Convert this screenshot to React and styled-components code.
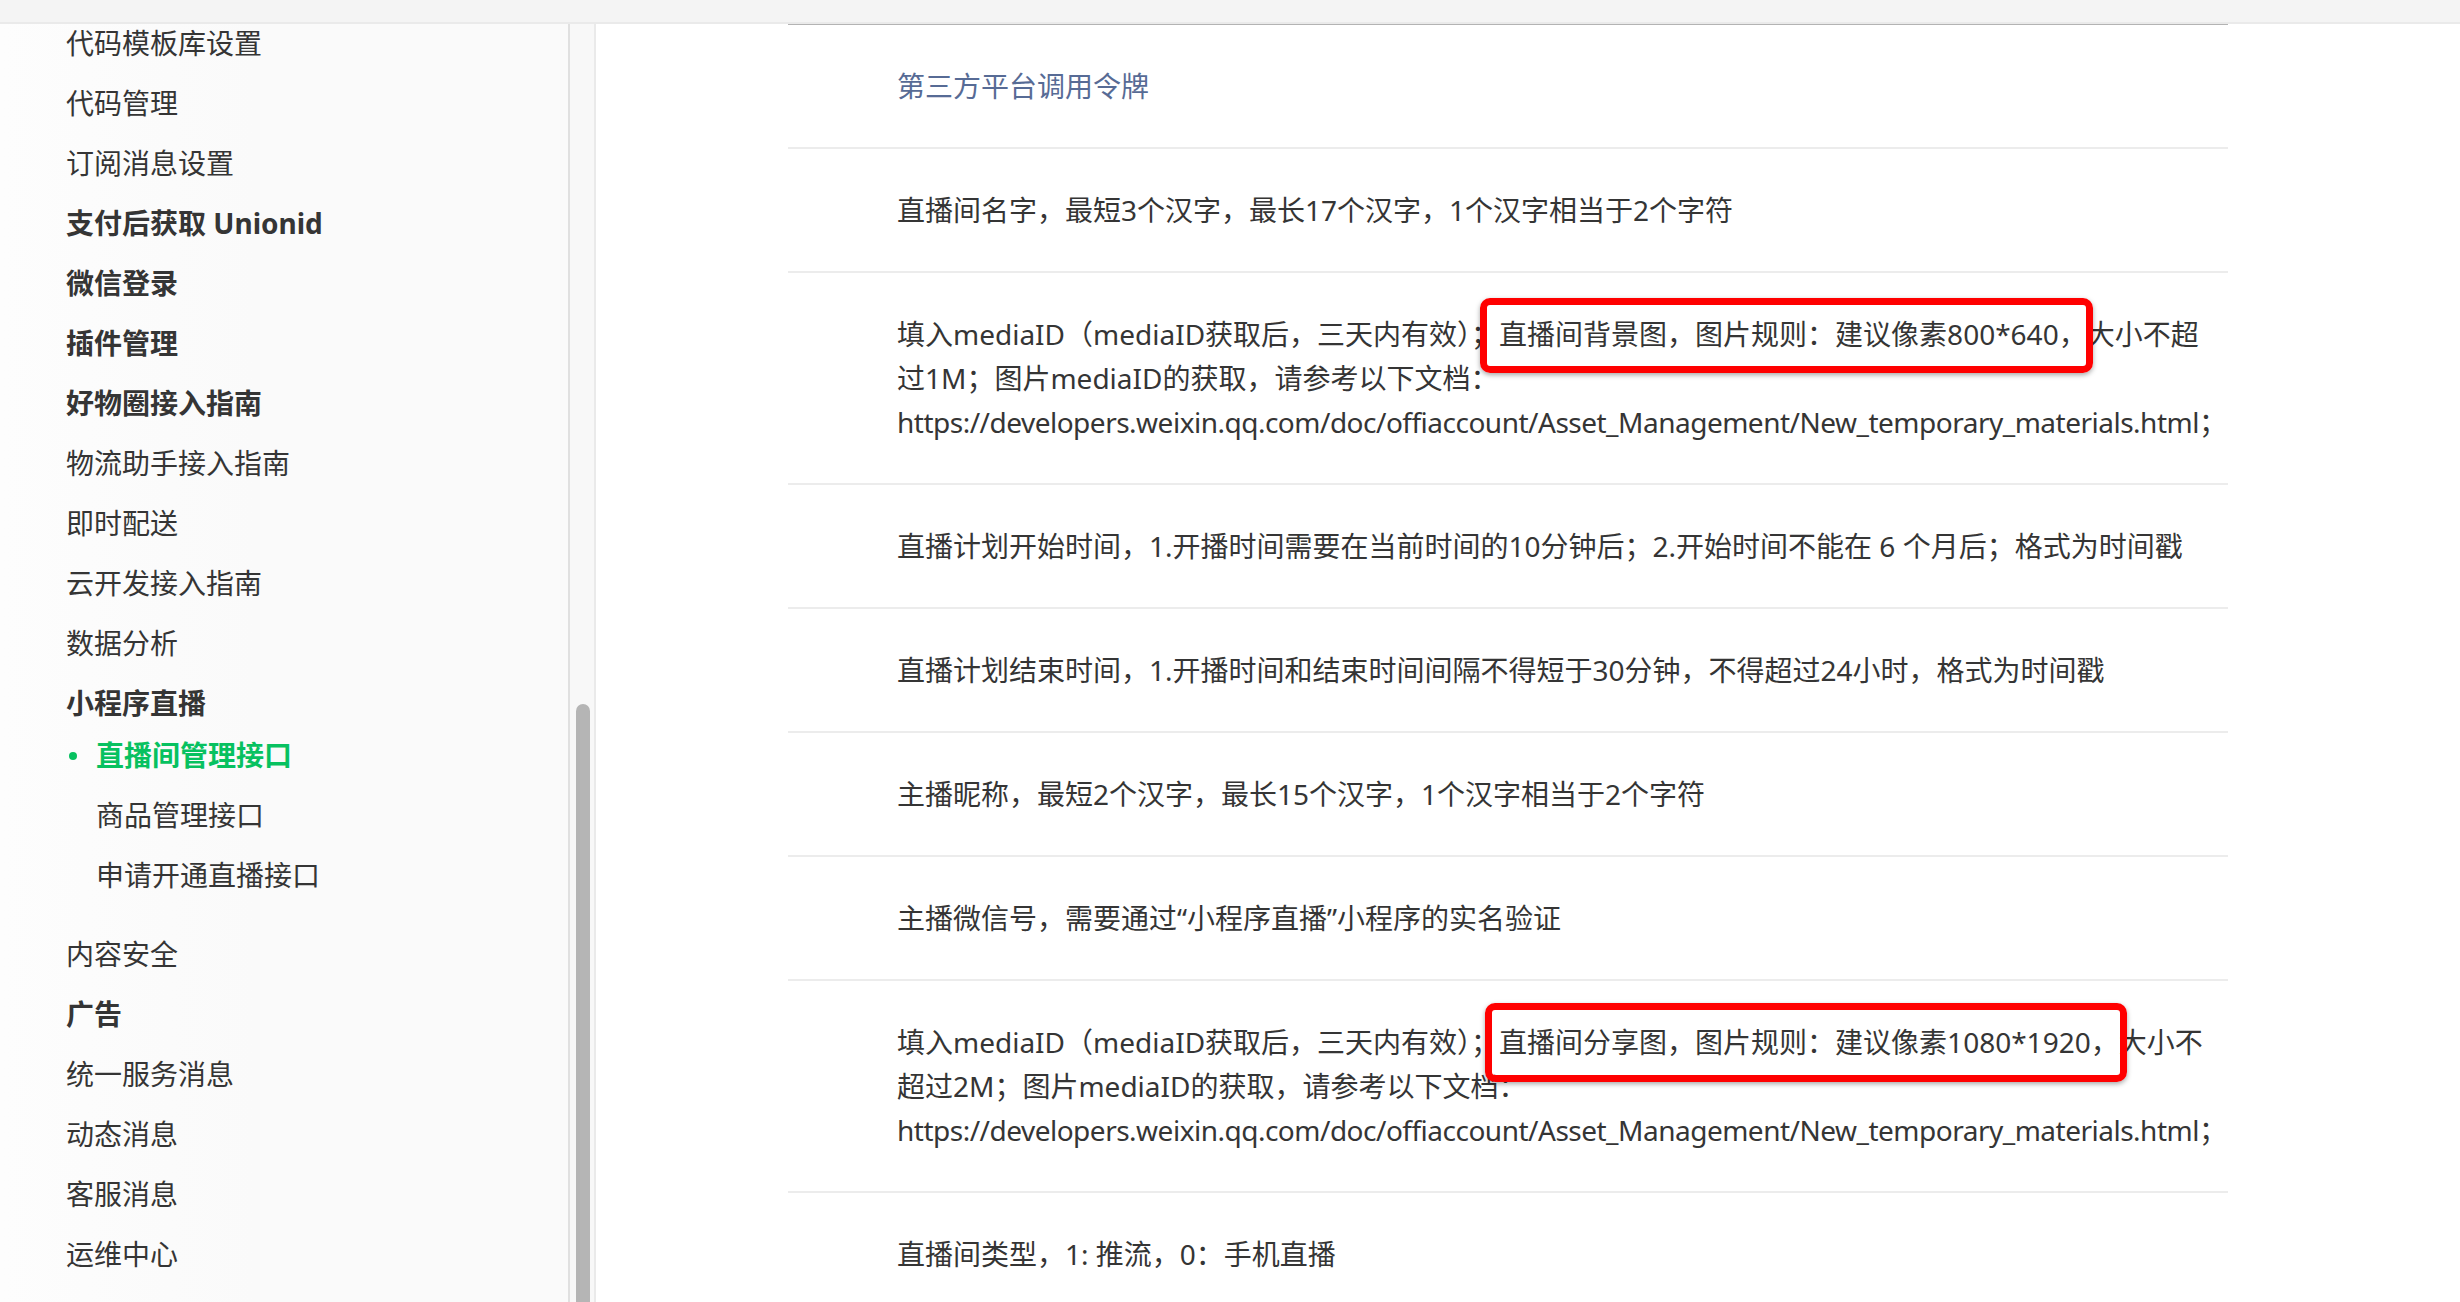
import React from 'react';
import styled, { createGlobalStyle } from 'styled-components';

const GlobalStyle = createGlobalStyle`
  html, body {
    margin: 0;
    padding: 0;
    height: 100%;
    overflow: hidden;
    background: #fff;
  }
  body {
    font-family: "Noto Sans", "Noto Sans CJK SC", sans-serif;
    color: #353535;
  }
`;

const Page = styled.div`
  display: flex;
  flex-direction: column;
  width: 2460px;
  height: 1302px;
  overflow: hidden;
`;

const TopBar = styled.div`
  height: 22px;
  flex-shrink: 0;
  background: #f4f4f4;
  border-bottom: 2px solid #eaeaea;
`;

const Body = styled.div`
  display: flex;
  flex: 1;
  min-height: 0;
`;

const Sidebar = styled.nav`
  width: 568px;
  flex-shrink: 0;
  background: linear-gradient(to right, #fdfdfd 0%, #fafafa 45%);
  border-right: 2px solid #e0e0e0;
  overflow: hidden;
`;

const NavList = styled.ul`
  list-style: none;
  margin: 0;
  padding: 1px 0 0 66px;
  display: flex;
  flex-direction: column;
  gap: 24px;
`;

const NavItem = styled.li`
  font-size: 28px;
  line-height: 36px;
  height: 36px;
  white-space: nowrap;
  font-weight: ${({ $bold }) => ($bold ? 700 : 400)};
  color: #353535;
`;

const SubList = styled.ul`
  list-style: none;
  margin: -8px 0 19px;
  padding: 0 0 0 30px;
  display: flex;
  flex-direction: column;
  gap: 24px;
`;

const SubItem = styled.li`
  position: relative;
  font-size: 28px;
  line-height: 36px;
  height: 36px;
  white-space: nowrap;
  font-weight: ${({ $active }) => ($active ? 700 : 400)};
  color: ${({ $active }) => ($active ? '#07c160' : '#353535')};

  &::before {
    content: '';
    display: ${({ $active }) => ($active ? 'block' : 'none')};
    position: absolute;
    left: -27px;
    top: 15px;
    width: 8px;
    height: 8px;
    border-radius: 50%;
    background: #07c160;
  }
`;

const ScrollTrack = styled.div`
  width: 26px;
  flex-shrink: 0;
  background: #f8f8f8;
  border-right: 2px solid #eaeaea;
  display: flex;
  flex-direction: column;
  padding: 680px 4px 0 6px;
  box-sizing: border-box;
`;

const ScrollThumb = styled.div`
  flex: 1;
  background: #b5b5b5;
  border-radius: 8px 8px 0 0;
`;

const Main = styled.main`
  flex: 1;
  background: #fff;
  padding-left: 192px;
  overflow: hidden;
`;

const Table = styled.div`
  width: 1440px;
  border-top: 1px solid #b3b3b3;
`;

const Row = styled.div`
  position: relative;
  padding: 39px 20px 39px 109px;
  border-bottom: 2px solid #ececec;
  font-size: 28px;
  line-height: 44px;
  white-space: nowrap;
  color: ${({ $link }) => ($link ? '#576b95' : '#353535')};
`;

const DocUrl = styled.span`
  letter-spacing: -0.5px;
`;

const Highlight = styled.div`
  position: absolute;
  top: ${({ $top }) => $top}px;
  left: ${({ $left }) => $left}px;
  width: ${({ $width }) => $width}px;
  height: ${({ $height }) => $height}px;
  box-sizing: border-box;
  border: 7px solid #ff0000;
  border-radius: 10px;
  box-shadow: 0 2px 5px rgba(0, 0, 0, 0.35);
  pointer-events: none;
`;

const navTop = [
  { label: '代码模板库设置' },
  { label: '代码管理' },
  { label: '订阅消息设置' },
  { label: '支付后获取 Unionid', bold: true },
  { label: '微信登录', bold: true },
  { label: '插件管理', bold: true },
  { label: '好物圈接入指南', bold: true },
  { label: '物流助手接入指南' },
  { label: '即时配送' },
  { label: '云开发接入指南' },
  { label: '数据分析' },
  { label: '小程序直播', bold: true },
];

const liveSub = [
  { label: '直播间管理接口', active: true },
  { label: '商品管理接口' },
  { label: '申请开通直播接口' },
];

const navBottom = [
  { label: '内容安全' },
  { label: '广告', bold: true },
  { label: '统一服务消息' },
  { label: '动态消息' },
  { label: '客服消息' },
  { label: '运维中心' },
];

const URL =
  'https://developers.weixin.qq.com/doc/offiaccount/Asset_Management/New_temporary_materials.html；';

const rows = [
  { lines: ['第三方平台调用令牌'], link: true },
  { lines: ['直播间名字，最短3个汉字，最长17个汉字，1个汉字相当于2个字符'] },
  {
    lines: [
      '填入mediaID（mediaID获取后，三天内有效）；直播间背景图，图片规则：建议像素800*640，大小不超',
      '过1M；图片mediaID的获取，请参考以下文档：',
    ],
    url: URL,
    box: { top: 25, left: 692, width: 613, height: 75 },
  },
  { lines: ['直播计划开始时间，1.开播时间需要在当前时间的10分钟后；2.开始时间不能在 6 个月后；格式为时间戳'] },
  { lines: ['直播计划结束时间，1.开播时间和结束时间间隔不得短于30分钟，不得超过24小时，格式为时间戳'] },
  { lines: ['主播昵称，最短2个汉字，最长15个汉字，1个汉字相当于2个字符'] },
  { lines: ['主播微信号，需要通过“小程序直播”小程序的实名验证'] },
  {
    lines: [
      '填入mediaID（mediaID获取后，三天内有效）；直播间分享图，图片规则：建议像素1080*1920，大小不',
      '超过2M；图片mediaID的获取，请参考以下文档：',
    ],
    url: URL,
    box: { top: 22, left: 697, width: 642, height: 79 },
  },
  { lines: ['直播间类型，1: 推流，0：手机直播'] },
];

const App = () => (
  <>
    <GlobalStyle />
    <Page>
      <TopBar />
      <Body>
        <Sidebar>
          <NavList>
            {navTop.map((item) => (
              <NavItem key={item.label} $bold={item.bold}>
                {item.label}
              </NavItem>
            ))}
            <SubList>
              {liveSub.map((item) => (
                <SubItem key={item.label} $active={item.active}>
                  {item.label}
                </SubItem>
              ))}
            </SubList>
            {navBottom.map((item) => (
              <NavItem key={item.label} $bold={item.bold}>
                {item.label}
              </NavItem>
            ))}
          </NavList>
        </Sidebar>
        <ScrollTrack>
          <ScrollThumb />
        </ScrollTrack>
        <Main>
          <Table>
            {rows.map((row, i) => (
              <Row key={i} $link={row.link}>
                {row.lines.map((line, j) => (
                  <React.Fragment key={j}>
                    {j > 0 && <br />}
                    {line}
                  </React.Fragment>
                ))}
                {row.url && (
                  <>
                    <br />
                    <DocUrl>{row.url}</DocUrl>
                  </>
                )}
                {row.box && (
                  <Highlight
                    $top={row.box.top}
                    $left={row.box.left}
                    $width={row.box.width}
                    $height={row.box.height}
                  />
                )}
              </Row>
            ))}
          </Table>
        </Main>
      </Body>
    </Page>
  </>
);

export default App;
